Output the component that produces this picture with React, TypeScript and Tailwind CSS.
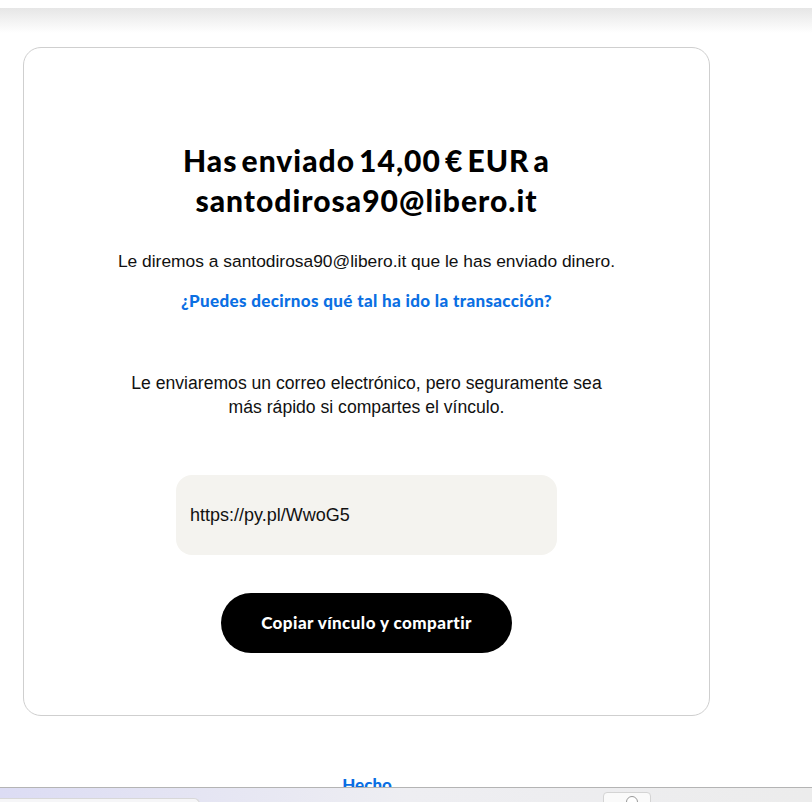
export default function App() {
  return (
    <div className="relative min-h-[802px] bg-white font-['Liberation_Sans',Arial,sans-serif] text-[#111]">
      {/* top shade */}
      <div className="h-[8px] bg-white" />
      <div className="h-[25px] bg-gradient-to-b from-[#e6e6e6] to-[#ffffff]" />

      {/* Card */}
      <div className="ml-[23px] mt-[14px] w-[687px] rounded-[18px] border border-[#cfcfcf] pt-[92px] pb-[62px] flex flex-col items-center">
        <h1 className="text-center font-['Lato',sans-serif] text-[30px] font-black leading-[40px] tracking-[1px] [word-spacing:-4px] text-[#000]">
          Has enviado 14,00 € EUR a
          <br />
          santodirosa90@libero.it
        </h1>
        <p className="mt-[29px] text-[17.4px] leading-[24px] text-center">
          Le diremos a santodirosa90@libero.it que le has enviado dinero.
        </p>
        <a className="mt-[16px] font-['Lato',sans-serif] text-[17px] font-black leading-[24px] tracking-[0.35px] text-[#0b6fe3] cursor-pointer">
          ¿Puedes decirnos qué tal ha ido la transacción?
        </a>
        <p className="mt-[58px] w-[490px] text-[17.6px] leading-[24px] text-center">
          Le enviaremos un correo electrónico, pero seguramente sea más rápido si compartes el vínculo.
        </p>
        <div className="mt-[56px] w-[381px] h-[80px] rounded-[16px] bg-[#f4f3ef] flex items-center pl-[14px] text-[18px] text-[#111]">
          https://py.pl/WwoG5
        </div>
        <button className="mt-[38px] w-[291px] h-[60px] rounded-full bg-black text-white font-['Lato',sans-serif] text-[17px] font-black tracking-[0.45px]">
          Copiar vínculo y compartir
        </button>
      </div>

      <div className="mt-[57px] flex justify-center pr-[78px]">
        <a className="font-['Lato',sans-serif] text-[17px] font-black leading-[24px] text-[#0b6fe3] cursor-pointer">
          Hecho
        </a>
      </div>

      {/* taskbar overlay */}
      <div className="fixed left-0 right-0 top-[787px] h-[15px] border-t border-[#b4b4b4] bg-gradient-to-r from-[#dcdcf4] via-[#eeeef2] to-[#ececec]">
        <div className="absolute left-0 top-[10px] w-[200px] h-[6px] rounded-tr-[6px] border-t border-r border-[#d8d8d8] bg-[#f6f6f8]" />
        <div className="absolute left-[603px] top-[4px] w-[48px] h-[12px] rounded-t-[4px] border border-[#d4d4d4] bg-[#fafafa]">
          <div className="absolute left-[22px] top-[3px] w-[12px] h-[12px] rounded-full border border-[#999] bg-white" />
        </div>
      </div>
    </div>
  );
}
